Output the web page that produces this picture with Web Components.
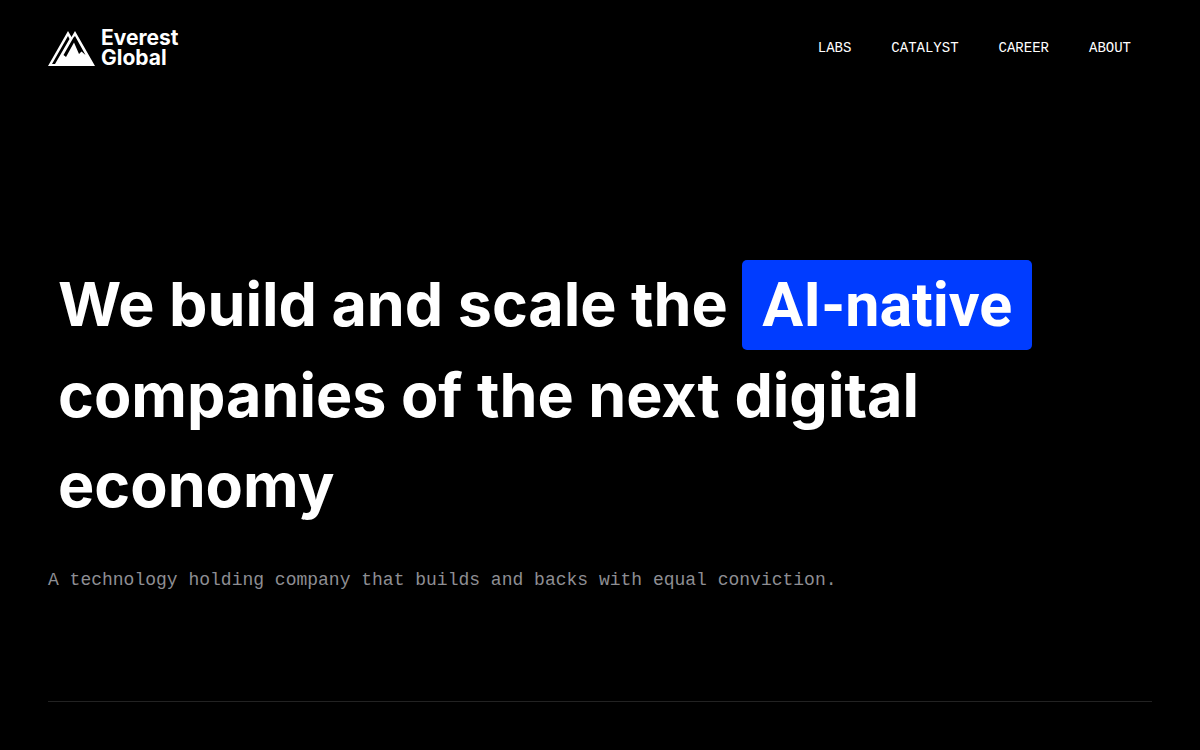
<!DOCTYPE html>
<html lang="en">
<head>
<meta charset="utf-8">
<meta name="viewport" content="width=device-width, initial-scale=1">
<title>Everest Global</title>
<style>
  html { background: #000; }
  body { margin: 0; color: #fff; font-family: Inter, sans-serif; }
</style>
</head>
<body>
<eg-page>
  <eg-header slot="header">
    <eg-logo>Everest Global</eg-logo>
    <eg-nav-link slot="nav" href="#labs">LABS</eg-nav-link>
    <eg-nav-link slot="nav" href="#catalyst">CATALYST</eg-nav-link>
    <eg-nav-link slot="nav" href="#career">CAREER</eg-nav-link>
    <eg-nav-link slot="nav" href="#about">ABOUT</eg-nav-link>
  </eg-header>
  <eg-hero>We build and scale the <eg-highlight>AI-native</eg-highlight> companies of the next digital economy<span slot="lead">A technology holding company that builds and backs with equal conviction.</span></eg-hero>
</eg-page>
<script>
const define = (name, html) => customElements.define(name, class extends HTMLElement {
  constructor() {
    super();
    this.attachShadow({ mode: "open" }).innerHTML = html;
  }
});

define("eg-page", `
  <style>
    :host { display: block; padding: 0 48px; }
  </style>
  <slot name="header"></slot>
  <main><slot></slot></main>`);

define("eg-header", `
  <style>
    :host { display: block; }
    header { display: flex; align-items: center; justify-content: space-between; height: 96px; padding-right: 21px; }
    nav { display: flex; gap: 40px; }
  </style>
  <header><slot></slot><nav aria-label="Main"><slot name="nav"></slot></nav></header>`);

define("eg-logo", `
  <style>
    :host { display: block; }
    a { display: flex; align-items: center; gap: 5px; color: inherit; text-decoration: none; font: 700 21px/20px Inter, sans-serif; }
    svg { display: block; width: 48px; height: 36px; }
    .name { width: min-content; }
  </style>
  <a href="#home">
    <svg viewBox="0 0 48 36" aria-hidden="true">
      <path fill="#fff" fill-rule="evenodd" d="M0 36 20 1 23.500 7 27 1 47 36ZM4 34 20 6 21.500 9 7 34ZM25.500 7.500 27 6 37.500 25 33.500 21.500 31 24 26 12.500 18 27 15.500 25Z"/>
    </svg>
    <span class="name"><slot></slot></span>
  </a>`);

customElements.define("eg-nav-link", class extends HTMLElement {
  constructor() {
    super();
    this.attachShadow({ mode: "open" }).innerHTML = `
      <style>
        :host { display: block; }
        a { display: block; color: #fff; text-decoration: none; font: 14px/20px "Liberation Mono", monospace; }
      </style>
      <a><slot></slot></a>`;
    this.shadowRoot.querySelector("a").href = this.getAttribute("href");
  }
});

define("eg-highlight", `
  <style>
    :host { display: inline-block; padding: 0 20px; border-radius: 5px; background: #003cff; font-family: Roboto, sans-serif; }
  </style>
  <slot></slot>`);

define("eg-hero", `
  <style>
    :host { display: block; padding: 163px 0 107px; border-bottom: 1px solid #222; }
    h1 { margin: 0; padding: 0 10px; max-width: 1020px; font: 700 61px/90px Inter, sans-serif; }
    p { margin: 36px 0 0; color: #8e8e93; font: 18px/28px "Liberation Mono", monospace; }
  </style>
  <h1><slot></slot></h1>
  <p><slot name="lead"></slot></p>`);
</script>
</body>
</html>
